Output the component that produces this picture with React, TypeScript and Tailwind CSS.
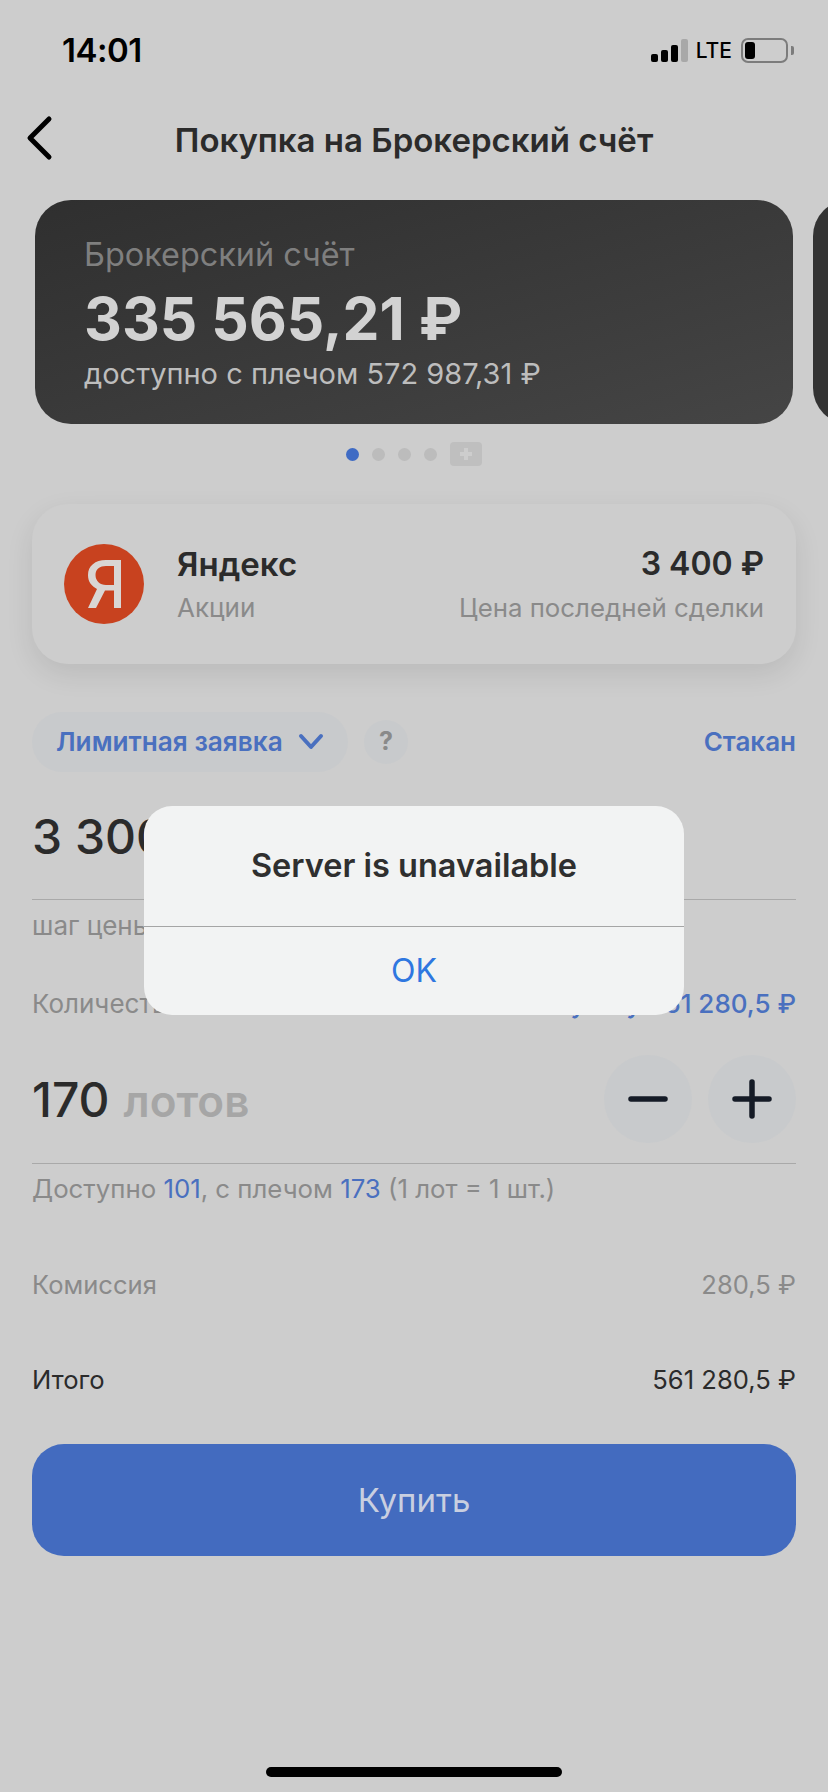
import React from 'react';

const BLUE = 'text-[#4a70bf]';

const StatusBar = () => (
  <div className="flex h-[100px] items-center justify-between pl-[62px] pr-[34px]">
    <span className="text-[33px] font-semibold leading-none tracking-[-0.5px] text-black">14:01</span>
    <div className="flex items-center">
      <div className="flex items-end gap-[3px]">
        <div className="h-[8px] w-[7px] rounded-[2px] bg-black" />
        <div className="h-[12px] w-[7px] rounded-[2px] bg-black" />
        <div className="h-[17px] w-[7px] rounded-[2px] bg-black" />
        <div className="h-[23px] w-[7px] rounded-[2px] bg-[#a8a8a8]" />
      </div>
      <span className="ml-[8px] text-[21px] font-medium leading-none text-black">LTE</span>
      <div className="ml-[9px] flex h-[25px] w-[47px] items-center rounded-[7px] border-2 border-[#7c7c7c] pl-[2px]">
        <div className="h-[17px] w-[10px] rounded-[3px] bg-black" />
      </div>
      <div className="ml-[3px] h-[9px] w-[3px] rounded-r-[2px] bg-[#7c7c7c]" />
    </div>
  </div>
);

const NavBar = () => (
  <div className="relative flex h-[80px] items-center justify-center">
    <svg className="absolute left-[25px] top-[15px]" width="28" height="46" viewBox="0 0 28 46" fill="none">
      <path d="M24 4 L5 23 L24 42" stroke="#000" strokeWidth="5" strokeLinecap="round" strokeLinejoin="round" />
    </svg>
    <h1 className="text-[33px] font-semibold leading-none text-[#2b2b2b]">Покупка на Брокерский счёт</h1>
  </div>
);

const AccountCards = () => (
  <div className="mt-[20px] flex gap-[20px] pl-[35px]">
    <div className="h-[224px] w-[758px] shrink-0 rounded-[36px] bg-gradient-to-br from-[#2f2f2f] to-[#454545] pl-[49px] pt-[37px]">
      <div className="text-[32.4px] leading-[36px] text-[#7f7f7f]">Брокерский счёт</div>
      <div className="mt-[10px] text-[58.7px] font-bold leading-[72px] text-[#d2d2d2]">335 565,21 ₽</div>
      <div className="mt-[1px] text-[29px] leading-[36px] text-[#bdbdbd]">доступно с плечом 572 987,31 ₽</div>
    </div>
    <div className="h-[224px] w-[758px] shrink-0 rounded-[36px] bg-[#333333]" />
  </div>
);

const Dots = () => (
  <div className="mt-[18px] flex h-[24px] items-center justify-center">
    <div className="h-[13px] w-[13px] rounded-full bg-[#3f6bc4]" />
    <div className="ml-[13px] h-[13px] w-[13px] rounded-full bg-[#bcbcbc]" />
    <div className="ml-[13px] h-[13px] w-[13px] rounded-full bg-[#bcbcbc]" />
    <div className="ml-[13px] h-[13px] w-[13px] rounded-full bg-[#bcbcbc]" />
    <div className="ml-[13px] flex h-[24px] w-[32px] items-center justify-center rounded-[4px] bg-[#bfbfbf]">
      <svg width="14" height="14" viewBox="0 0 14 14">
        <path d="M7 1 V13 M1 7 H13" stroke="#cdcdcd" strokeWidth="4" />
      </svg>
    </div>
  </div>
);

const YandexLogo = () => (
  <svg width="80" height="80" viewBox="0 0 80 80" className="shrink-0">
    <circle cx="40" cy="40" r="40" fill="#c8421f" />
    <path
      fillRule="evenodd"
      fill="#d9d6d4"
      d="M57 16 H42 C31 16 24 22 24 31 C24 38 27.5 42 33 45 L24 64 H32 L41 46.5 H50 V64 H57 Z M50 22 H42 C36 22 31.5 25 31.5 31 C31.5 37 36 41 42 41 H50 Z"
    />
  </svg>
);

const StockCard = () => (
  <div className="mx-[32px] mt-[38px] flex h-[160px] items-center rounded-[36px] bg-[#cdcdcd] pl-[32px] pr-[32px] shadow-[0_10px_28px_rgba(0,0,0,0.09)]">
    <YandexLogo />
    <div className="ml-[33px] flex-1">
      <div className="text-[33px] font-semibold leading-[40px] text-[#2b2b2b]">Яндекс</div>
      <div className="mt-[8px] text-[26px] leading-[32px] text-[#8a8a8a]">Акции</div>
    </div>
    <div className="text-right">
      <div className="text-[32px] font-semibold leading-[40px] text-[#2b2b2b]">3 400 ₽</div>
      <div className="mt-[8px] text-[25.8px] leading-[32px] text-[#8a8a8a]">Цена последней сделки</div>
    </div>
  </div>
);

const OrderType = () => (
  <div className="mx-[32px] mt-[48px] flex h-[60px] items-center">
    <div className="flex h-[60px] w-[316px] items-center rounded-full bg-[#c8cacc] pl-[24px]">
      <span className={`text-[26.2px] font-semibold leading-none ${BLUE}`}>Лимитная заявка</span>
      <svg className="ml-[15px]" width="26" height="18" viewBox="0 0 26 18" fill="none">
        <path d="M3 3 L13 14 L23 3" stroke="#4a70bf" strokeWidth="4" strokeLinecap="round" strokeLinejoin="round" />
      </svg>
    </div>
    <div className="ml-[16px] flex h-[44px] w-[44px] items-center justify-center rounded-full bg-[#c8cacc] text-[25px] font-bold text-[#8a8a8a]">?</div>
    <span className={`ml-auto text-[26px] font-semibold leading-none ${BLUE}`}>Стакан</span>
  </div>
);

const PriceBlock = () => (
  <div className="mx-[32px]">
    <div className="h-[128px] border-b border-[#a9a9a9] pt-[36px] text-[48px] font-medium leading-[58px] text-[#2b2b2b]">3 300 ₽</div>
    <div className="mt-[11px] text-[26px] leading-[30px] text-[#8a8a8a]">шаг цены 1 ₽</div>
    <div className="mt-[47px] flex justify-between text-[26px] leading-[32px]">
      <span className="text-[#8a8a8a]">Количество</span>
      <span className={`font-medium ${BLUE}`}>На сумму 561 280,5 ₽</span>
    </div>
  </div>
);

const LotsBlock = () => (
  <div className="mx-[32px] mt-[35px]">
    <div className="flex h-[109px] items-start border-b border-[#a9a9a9]">
      <div className="pt-[16px] leading-[58px]">
        <span className="text-[48px] font-medium text-[#2b2b2b]">170</span>
        <span className="ml-[14px] text-[44px] font-semibold text-[#a6a6a6]">лотов</span>
      </div>
      <div className="ml-auto flex gap-[16px]">
        <div className="flex h-[88px] w-[88px] items-center justify-center rounded-full bg-[#c8cacc]">
          <svg width="40" height="40" viewBox="0 0 40 40">
            <path d="M3 20 H37" stroke="#151b26" strokeWidth="5.5" strokeLinecap="round" />
          </svg>
        </div>
        <div className="flex h-[88px] w-[88px] items-center justify-center rounded-full bg-[#c8cacc]">
          <svg width="40" height="40" viewBox="0 0 40 40">
            <path d="M3 20 H37 M20 3 V37" stroke="#151b26" strokeWidth="5.5" strokeLinecap="round" />
          </svg>
        </div>
      </div>
    </div>
    <div className="mt-[9px] text-[25.8px] leading-[32px] text-[#8a8a8a]">
      Доступно <span className={BLUE}>101</span>, с плечом <span className={BLUE}>173</span> (1 лот = 1 шт.)
    </div>
  </div>
);

const Summary = () => (
  <div className="mx-[32px] mt-[64px] text-[25.6px] leading-[32px]">
    <div className="flex justify-between text-[#8a8a8a]">
      <span>Комиссия</span>
      <span>280,5 ₽</span>
    </div>
    <div className="mt-[63px] flex justify-between text-[#2b2b2b]">
      <span>Итого</span>
      <span>561 280,5 ₽</span>
    </div>
  </div>
);

const Alert = () => (
  <div className="absolute left-[144px] top-[806px] w-[540px] overflow-hidden rounded-[28px] bg-[#f2f3f3]">
    <div className="flex h-[121px] items-center justify-center border-b border-[#a5a5a5] text-[32.5px] font-semibold leading-none text-[#2f2f2f]">
      Server is unavailable
    </div>
    <div className="flex h-[88px] items-center justify-center text-[32px] leading-none text-[#2f77e0]">OK</div>
  </div>
);

export default function App() {
  return (
    <div className="relative h-[1792px] w-[828px] overflow-hidden bg-[#cdcdcd] font-['Inter',sans-serif]">
      <StatusBar />
      <NavBar />
      <AccountCards />
      <Dots />
      <StockCard />
      <OrderType />
      <PriceBlock />
      <LotsBlock />
      <Summary />
      <div className="mx-[32px] mt-[48px] flex h-[112px] items-center justify-center rounded-[32px] bg-[#436bbf] text-[33px] leading-none text-[#c9cfe0]">
        Купить
      </div>
      <div className="absolute bottom-[15px] left-[266px] h-[10px] w-[296px] rounded-full bg-black" />
      <Alert />
    </div>
  );
}
